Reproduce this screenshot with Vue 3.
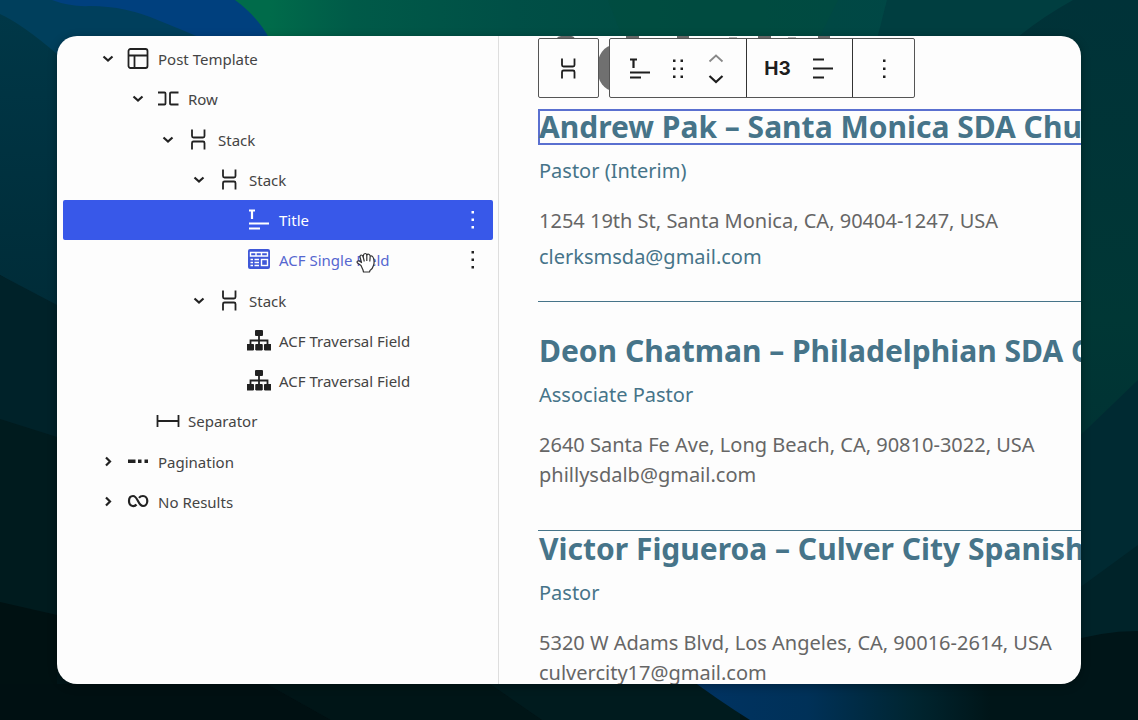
<script setup>
const rows = [
  { label: 'Post Template', icon: 'template', level: 0, toggle: 'open' },
  { label: 'Row', icon: 'row', level: 1, toggle: 'open' },
  { label: 'Stack', icon: 'stack', level: 2, toggle: 'open' },
  { label: 'Stack', icon: 'stack', level: 3, toggle: 'open' },
  { label: 'Title', icon: 'title', level: 4, state: 'selected', menu: true },
  { label: 'ACF Single Field', icon: 'field', level: 4, state: 'hovered', menu: true },
  { label: 'Stack', icon: 'stack', level: 3, toggle: 'open' },
  { label: 'ACF Traversal Field', icon: 'sitemap', level: 4 },
  { label: 'ACF Traversal Field', icon: 'sitemap', level: 4 },
  { label: 'Separator', icon: 'separator', level: 1 },
  { label: 'Pagination', icon: 'pagination', level: 0, toggle: 'closed' },
  { label: 'No Results', icon: 'loop', level: 0, toggle: 'closed' },
]

const people = [
  {
    name: 'Andrew Pak – Santa Monica SDA Church',
    role: 'Pastor (Interim)',
    address: '1254 19th St, Santa Monica, CA, 90404-1247, USA',
    email: 'clerksmsda@gmail.com',
    linked: true,
    variant: 'active',
  },
  {
    name: 'Deon Chatman – Philadelphian SDA Church',
    role: 'Associate Pastor',
    address: '2640 Santa Fe Ave, Long Beach, CA, 90810-3022, USA',
    email: 'phillysdalb@gmail.com',
    variant: 'spaced',
  },
  {
    name: 'Victor Figueroa – Culver City Spanish SDA Church',
    role: 'Pastor',
    address: '5320 W Adams Blvd, Los Angeles, CA, 90016-2614, USA',
    email: 'culvercity17@gmail.com',
    variant: 'tight',
  },
]
</script>

<template>
  <div class="desktop">
    <svg class="wallpaper" viewBox="0 0 1138 720" preserveAspectRatio="none" aria-hidden="true">
      <defs>
        <linearGradient id="green" x1="0" x2="1" y1="0" y2="0">
          <stop offset="0" stop-color="#006b4a" />
          <stop offset="0.1" stop-color="#006b4a" />
          <stop offset="0.22" stop-color="#005a48" />
          <stop offset="0.45" stop-color="#004f46" />
          <stop offset="0.7" stop-color="#004a42" />
          <stop offset="1" stop-color="#004745" />
        </linearGradient>
        <linearGradient id="leftside" x1="0" x2="0" y1="0" y2="1">
          <stop offset="0" stop-color="#003747" />
          <stop offset="1" stop-color="#002c38" />
        </linearGradient>
        <linearGradient id="rightside" x1="0" x2="0" y1="0" y2="1">
          <stop offset="0" stop-color="#003238" />
          <stop offset="0.5" stop-color="#003735" />
          <stop offset="1" stop-color="#002b31" />
        </linearGradient>
        <linearGradient id="bluefoot" x1="0" x2="1" y1="0" y2="0">
          <stop offset="0" stop-color="#003363" />
          <stop offset="0.4" stop-color="#003158" />
          <stop offset="0.75" stop-color="#002530" />
          <stop offset="1" stop-color="#001518" />
        </linearGradient>
      </defs>
      <rect width="1138" height="720" fill="#001518" />
      <rect x="200" width="700" height="360" fill="url(#green)" />
      <path d="M608 0L622 36H820L838 0Z" fill="#004d40" opacity="0.6" />
      <path d="M0 0H235Q258 17 269 38V200H0Z" fill="#00407e" />
      <path d="M0 0H52Q70 7 90 6Q126 6 160 21Q180 29 201 38V200H0Z" fill="#003f5c" />
      <path d="M0 14Q22 24 57 54V310L0 275Z" fill="url(#leftside)" />
      <path d="M0 275L57 305V440H0Z" fill="#002229" />
      <path d="M0 419L57 437V620H0Z" fill="#001b1e" />
      <path d="M0 602L57 615V720H0Z" fill="#001112" />
      <path d="M887 0H1138V90H864Z" fill="#003e40" />
      <path d="M1073 0H1138V640H1060V36H1019Q1044 16 1073 0Z" fill="url(#rightside)" />
      <path d="M1138 380L1060 455V640H1138Z" fill="#002a32" />
      <path d="M1138 545L1060 602V650H1138Z" fill="#002329" />
      <path d="M1060 644Q1100 631 1138 631V720H900V684H1060Z" fill="#001518" />
      <path d="M0 684H267L331 720H0Z" fill="#001012" />
      <path d="M267 684H490L542 720H331Z" fill="#001517" />
      <path d="M490 684H740V720H542Z" fill="#001b1e" />
      <path d="M686 676H990V720H750Q718 700 686 676Z" fill="url(#bluefoot)" />
    </svg>

    <div class="window">
      <nav class="sidebar" aria-label="List view">
        <ul class="tree">
          <li v-for="(row, i) in rows" :key="i" :class="['node', 'level-' + row.level, row.state]">
            <button v-if="row.toggle" class="toggle" type="button" :aria-expanded="row.toggle === 'open'" :aria-label="'Toggle ' + row.label">
              <svg class="icon" viewBox="0 0 24 24">
                <path v-if="row.toggle === 'open'" d="M7.500 9.500L12 13.500L16.500 9.500" class="line" />
                <path v-else d="M10 7.500L14 11.500L10 15.500" class="line" />
              </svg>
            </button>
            <span v-else class="toggle"></span>
            <button class="block" type="button">
              <svg class="icon" viewBox="0 0 24 24" aria-hidden="true">
                <template v-if="row.icon === 'template'">
                  <rect x="2.500" y="2" width="19" height="19" rx="2" class="thin" />
                  <path d="M2.500 8.500H21.500M8.500 8.500V21" class="thin" />
                </template>
                <path v-else-if="row.icon === 'row'" d="M2 5.500H8.500Q9.500 5.500 9.500 6.500V16.500Q9.500 17.500 8.500 17.500H2M22.500 5.500H15Q14 5.500 14 6.500V16.500Q14 17.500 15 17.500H22.500" class="thin" />
                <path v-else-if="row.icon === 'stack'" d="M6 1.500V8Q6 9.500 7.500 9.500H17Q18.500 9.500 18.500 8V1.500M6 21.500V15Q6 13.500 7.500 13.500H17Q18.500 13.500 18.500 15V21.500" class="thin" />
                <template v-else-if="row.icon === 'title'">
                  <path d="M2 2.500H8M5 2.500V11" class="line" />
                  <path d="M2 15.500H22M2 20.500H13" class="thin" />
                </template>
                <template v-else-if="row.icon === 'field'">
                  <rect x="1" y="1" width="22" height="20" rx="2" fill="currentColor" />
                  <path d="M3.500 4.500H20.500V8H3.500ZM9 4.500V8M14.500 4.500V8" class="cut" />
                  <path d="M3.500 11.500H6M7.500 11.500H12M3.500 14.500H6M7.500 14.500H12M3.500 17.500H6M7.500 17.500H12" class="cut" />
                  <rect x="14.500" y="11.500" width="6" height="6" class="cut" />
                </template>
                <template v-else-if="row.icon === 'sitemap'">
                  <rect x="8" y="1" width="8" height="6" rx="1" fill="currentColor" />
                  <path d="M12 7V16M3.500 16V11.500H20.500V16" class="thin" />
                  <path d="M0 15.500H6.500V21H0ZM8.800 15.500H15.200V21H8.800ZM17.500 15.500H24V21H17.500Z" fill="currentColor" stroke="currentColor" stroke-linejoin="round" />
                </template>
                <path v-else-if="row.icon === 'separator'" d="M1.500 6V18M22.500 6V18M1.500 12H22.500" class="thin" />
                <path v-else-if="row.icon === 'pagination'" d="M2 9.500H9.500V13H2ZM12 9.500H15.500V13H12ZM18.500 9.500H22V13H18.500Z" fill="currentColor" />
                <path v-else d="M10.500 14.500C9.500 15.800 8 16.300 6.500 16C4 15.500 3 13.500 3 11C3 8 4.500 6 7 6C12 6 12 16 17 16C19.500 16 21.300 13.500 21.300 11C21.300 8 19.500 6 17 6C15.500 6 14 6.500 13 7.800" class="line" />
              </svg>
              <span>{{ row.label }}</span>
            </button>
            <button v-if="row.menu" class="more" type="button" :aria-label="'Options for ' + row.label">
              <svg class="icon" viewBox="0 0 24 24"><path d="M10.500 3H13V5.500H10.500ZM10.500 10.500H13V13H10.500ZM10.500 18H13V20.500H10.500Z" fill="currentColor" /></svg>
            </button>
            <svg v-if="row.state === 'hovered'" class="hand" viewBox="0 0 20 22" aria-hidden="true">
              <path d="M5 13.500L1.500 11Q0.500 9.500 1.800 9Q3 8.500 5.500 10.500L4 5Q4 3 5.300 3Q6.500 3 7.200 5L7.500 3Q8 1.500 9.300 1.500Q10.400 1.500 10.800 3Q11.500 1.800 12.800 2.200Q13.800 2.500 14.200 4.200Q15.400 3.500 16.400 4.400Q17.400 5.300 17.800 7.500Q18.500 10.500 17.500 13.500Q16.500 17 14 18.500L13.500 20H7.500L7 18Z" fill="#fff" stroke="#333" stroke-width="1.200" stroke-linejoin="round" />
              <path d="M7.200 5L8.300 9.500M10.800 3V9M14.200 4.200L13.800 9.500" fill="none" stroke="#333" stroke-width="1.200" />
            </svg>
          </li>
        </ul>
      </nav>

      <main class="canvas">
        <svg class="behind" width="320" height="60" viewBox="0 0 320 60" aria-hidden="true">
          <path d="M18 3Q20 0 23 0H33Q36 0 37 3ZM88 0H101V3H88ZM139 0H151V3H139ZM191 3V1.500H199V3ZM220 0H233V3H220ZM250 3V1.500H258V3ZM280 0H292V3H280Z" fill="#666" />
          <ellipse cx="76" cy="32" rx="17" ry="23" fill="#707070" />
        </svg>
        <div class="toolbar" role="toolbar" aria-label="Block tools">
          <div class="group parent">
            <button type="button" aria-label="Select parent block: Stack">
              <svg class="icon" viewBox="0 0 24 24"><path d="M5 2.500V9Q5 10.500 6.500 10.500H16Q17.500 10.500 17.500 9V2.500M5 22.500V16Q5 14.500 6.500 14.500H16Q17.500 14.500 17.500 16V22.500" class="thin" /></svg>
            </button>
          </div>
          <div class="group">
            <div class="part">
              <button type="button" aria-label="Title">
                <svg class="icon" viewBox="0 0 24 24"><path d="M2 3.500H9M5.500 3.500V12" class="line" /><path d="M2 16.500H22M2 21.500H13" class="thin" /></svg>
              </button>
              <button type="button" aria-label="Drag">
                <svg class="icon" viewBox="0 0 24 24"><path d="M7 3.500H9.500V6H7ZM14.500 3.500H17V6H14.500ZM7 11.500H9.500V14H7ZM14.500 11.500H17V14H14.500ZM7 19.500H9.500V22H7ZM14.500 19.500H17V22H14.500Z" fill="currentColor" /></svg>
              </button>
              <div class="movers">
                <button type="button" disabled aria-label="Move up"><svg viewBox="0 0 24 16"><path d="M5.500 10.500L12 4.500L18.500 10.500" class="thin" /></svg></button>
                <button type="button" aria-label="Move down"><svg viewBox="0 0 24 16"><path d="M5.500 7L12 13L18.500 7" class="line" /></svg></button>
              </div>
            </div>
            <div class="part headings">
              <button class="level" type="button">H3</button>
              <button type="button" aria-label="Align text">
                <svg class="icon" viewBox="0 0 24 24"><path d="M2 3.500H13M2 12.500H22M2 21.500H13" class="thin" /></svg>
              </button>
            </div>
            <div class="part options">
              <button type="button" aria-label="Options">
                <svg class="icon" viewBox="0 0 24 24"><path d="M11 3.500H13.500V6H11ZM11 11.500H13.500V14H11ZM11 19.500H13.500V22H11Z" fill="currentColor" /></svg>
              </button>
            </div>
          </div>
        </div>

        <article v-for="person in people" :key="person.name" :class="['person', person.variant]">
          <h3>{{ person.name }}</h3>
          <p class="role">{{ person.role }}</p>
          <p class="address">{{ person.address }}</p>
          <p class="email">
            <a v-if="person.linked" :href="'mailto:' + person.email">{{ person.email }}</a>
            <template v-else>{{ person.email }}</template>
          </p>
        </article>
      </main>
    </div>
  </div>
</template>

<style>
body {
  background: #001314;
}
</style>

<style scoped>
.desktop {
  position: relative;
  box-sizing: border-box;
  height: 100vh;
  padding: 36px 57px;
  font-family: "Noto Sans", "Open Sans", sans-serif;
}
.wallpaper {
  position: absolute;
  inset: 0;
  width: 100%;
  height: 100%;
}
.window {
  position: relative;
  display: flex;
  height: 100%;
  overflow: hidden;
  border-radius: 20px;
  background: #fdfdfd;
  box-shadow: 0 2px 10px rgba(0, 0, 0, 0.3);
}
button {
  display: flex;
  align-items: center;
  justify-content: center;
  margin: 0;
  padding: 0;
  border: 0;
  background: none;
  color: inherit;
  font: inherit;
}
.icon {
  flex: none;
  width: 24px;
  height: 24px;
}
.line,
.thin,
.cut {
  fill: none;
  stroke: currentColor;
  stroke-width: 1.800;
}
.line {
  stroke-width: 2.200;
}
.cut {
  stroke: #fff;
  stroke-width: 1.400;
}
.sidebar {
  flex: none;
  box-sizing: border-box;
  width: 442px;
  padding: 3px 5px 0 6px;
  border-right: 1px solid #dedede;
}
.tree {
  display: grid;
  grid-auto-rows: 1fr;
  min-height: 483px;
  margin: 0;
  padding: 0;
  list-style: none;
}
.node {
  position: relative;
  display: flex;
  align-items: center;
  padding: 0 8px 0 33px;
  border-radius: 2px;
  color: #222;
  font-size: 15px;
}
.level-1 { padding-left: 63px; }
.level-2 { padding-left: 93px; }
.level-3 { padding-left: 124px; }
.level-4 { padding-left: 154px; }
.toggle {
  width: 24px;
  height: 24px;
  margin-right: 6px;
}
.block {
  gap: 8px;
}
.block span {
  color: #444;
}
.more {
  margin-left: auto;
}
.selected,
.selected .block span {
  color: #fff;
}
.selected {
  background: #3858e9;
}
.hovered .block {
  color: #3f58d8;
}
.hovered .block span {
  color: #5567d0;
}
.hand {
  position: absolute;
  top: 12px;
  left: 293px;
  width: 20px;
  height: 22px;
}
.canvas {
  position: relative;
  flex: 1;
  min-width: 0;
  padding: 2px 0 0 39px;
}
.behind {
  position: absolute;
  top: 0;
  left: 39px;
}
.toolbar {
  position: relative;
  display: flex;
  gap: 10px;
  height: 60px;
  color: #1e1e1e;
}
.group {
  display: flex;
  box-sizing: border-box;
  border: 1px solid #555;
  border-radius: 2px;
  background: #fdfdfd;
}
.parent {
  justify-content: center;
  width: 61px;
}
.part {
  display: flex;
  align-items: center;
  justify-content: center;
  box-sizing: border-box;
  width: 136px;
  gap: 14px;
}
.headings {
  width: 107px;
  gap: 20px;
  border: solid #333;
  border-width: 0 1px;
}
.options {
  width: 61px;
}
.level {
  font-family: Inter, "Noto Sans", sans-serif;
  font-weight: 700;
  font-size: 19px;
}
.movers button {
  width: 24px;
  height: 18px;
}
.movers svg {
  width: 24px;
  height: 16px;
}
.movers button:disabled {
  color: #888;
}
.person {
  color: #666;
  font-size: 20px;
  line-height: 30px;
  white-space: nowrap;
}
.person h3 {
  box-sizing: border-box;
  height: 36px;
  margin: 0 0 11px;
  padding-left: 1px;
  color: #467489;
  font-size: 30px;
  line-height: 36px;
}
.person p {
  margin: 0;
  padding-left: 1px;
}
.person .role {
  margin-bottom: 20px;
  color: #467489;
}
.person a {
  color: #467489;
  text-decoration: none;
}
.active {
  margin-top: 11px;
  padding-bottom: 29px;
}
.active h3 {
  box-shadow: inset 2px 2px #5a70d0, inset 0 -2px #5a70d0;
}
.active .email {
  margin-top: 6px;
}
.spaced {
  padding: 31px 0 40px;
  border-top: 1px solid #467489;
}
.tight {
  border-top: 1px solid #467489;
}
</style>
